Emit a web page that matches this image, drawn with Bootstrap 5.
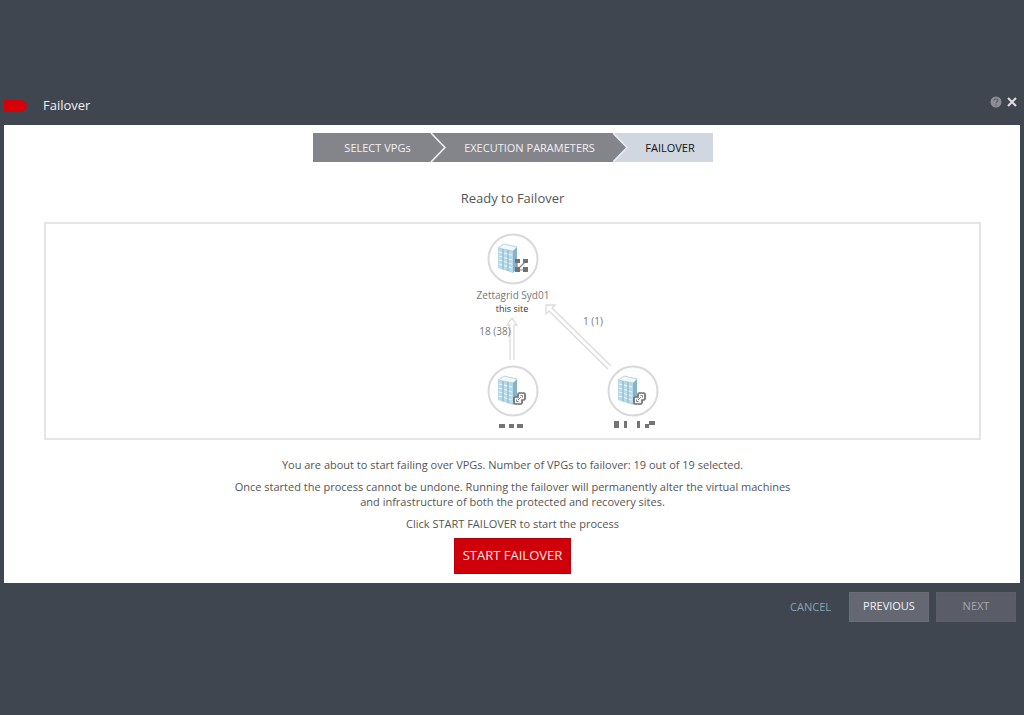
<!DOCTYPE html>
<html lang="en">
<head>
<meta charset="utf-8">
<meta name="viewport" content="width=device-width, initial-scale=1">
<title>Failover</title>
<link href="https://cdn.jsdelivr.net/npm/bootstrap@5.3.0/dist/css/bootstrap.min.css" rel="stylesheet">
<style>
body { background: #40464f; font-family: "Open Sans", sans-serif; font-size: 11px; line-height: 15px; color: #555; }
.wizard { border: 1px solid #4a434d; border-width: 1px 0; padding: 0 4px; }
.wizard-head { height: 35px; padding-bottom: 4px; color: #f0f1f3; }
.wizard-title { font-size: 13px; line-height: 18px; margin: 0 0 2px 15px; font-weight: 400; }
.head-icon { line-height: 0; color: inherit; border: 0; background: none; padding: 0; }
.wizard-panel { background: #fff; padding: 8px 39px 9px 40px; }
.wizard-panel p { margin-bottom: 7px; }
.steps { height: 29px; width: 400px; max-width: 100%; }
.step { background: #84848b; color: #f1f1f3; display: flex; align-items: center; justify-content: center; white-space: nowrap; }
.step-first { width: 118px; padding-left: 12px; }
.step-middle { flex: 1; padding-left: 15px; }
.step-last { background: #d0d7e1; color: #111; width: 99px; padding-left: 14px; }
.step-arrow { position: absolute; right: -15px; top: 0; z-index: 1; }
.ready { font-size: 13px; line-height: 18px; margin: 27px 0 15px; font-weight: 400; }
.topology { border: 2px solid #e5e5e5; margin-bottom: 17px; }
.topology svg { font-size: 10px; }
.btn-start { --bs-btn-color: #fbe9ea; --bs-btn-bg: #d0000b; --bs-btn-border-color: #b8000a; --bs-btn-hover-bg: #b8000a; --bs-btn-hover-color: #fff; --bs-btn-border-radius: 0; --bs-btn-font-size: 13px; --bs-btn-padding-x: 7px; --bs-btn-padding-y: 7px; height: 36px; min-width: 117px; white-space: nowrap; }
.wizard-foot { height: 42px; gap: 7px; padding: 5px 4px 0; }
.btn-foot { --bs-btn-color: #f2f2f4; --bs-btn-bg: #656872; --bs-btn-border-color: #6a6d77; --bs-btn-border-radius: 0; --bs-btn-font-size: 11px; --bs-btn-padding-y: 0; --bs-btn-padding-x: 0; --bs-btn-disabled-bg: #5a5d68; --bs-btn-disabled-color: #a4a7ae; --bs-btn-disabled-border-color: #5c5f6a; --bs-btn-disabled-opacity: 1; width: 80px; height: 30px; }
.cancel { color: #8ba3b3; margin-right: 11px; text-decoration: none; }
</style>
</head>
<body class="min-vh-100 d-flex flex-column justify-content-center">
<main class="wizard">
  <header class="wizard-head d-flex align-items-center">
    <svg width="24" height="14" viewBox="0 0 24 14" aria-hidden="true"><path d="M0 1H17Q20 1 24 7Q20 13 17 13H0Z" fill="#d5000a"/></svg>
    <h1 class="wizard-title">Failover</h1>
    <div class="ms-auto d-flex gap-1 pe-0 pb-2">
      <button type="button" class="head-icon" aria-label="Help"><svg width="12" height="12" viewBox="0 0 12 12"><circle cx="6" cy="6" r="5.5" fill="#8b8e95"/><path d="M4 4.7Q4.1 3 6 3Q8 3.1 7.8 4.6Q7.5 5.5 6.5 6Q6 6.3 6 7.2M6 8.3V9.5" fill="none" stroke="#5c626b" stroke-width="1.2"/></svg></button>
      <button type="button" class="head-icon" aria-label="Close"><svg width="14" height="12" viewBox="0 0 14 12"><path d="M2 2L10 10M10 2L2 10" stroke="#dfe1e4" stroke-width="2"/></svg></button>
    </div>
  </header>

  <section class="wizard-panel text-center">
    <div class="steps d-flex mx-auto">
      <div class="step step-first position-relative">SELECT VPGs
        <svg class="step-arrow" width="16" height="29" viewBox="0 0 16 29" aria-hidden="true"><path d="M0 0L14 14.5L0 29Z" fill="#84848b"/><path d="M1 0L15 14.5L1 29" fill="none" stroke="#f2f2f4" stroke-width="1.6"/></svg>
      </div>
      <div class="step step-middle position-relative">EXECUTION PARAMETERS
        <svg class="step-arrow" width="16" height="29" viewBox="0 0 16 29" aria-hidden="true"><path d="M0 0L14 14.5L0 29Z" fill="#84848b"/><path d="M0 0L14 14.5L0 29" fill="none" stroke="#e9edf2" stroke-width="1.6"/></svg>
      </div>
      <div class="step step-last">FAILOVER</div>
    </div>

    <h2 class="ready">Ready to Failover</h2>

    <div class="topology d-flex justify-content-center">
      <svg width="300" height="214" viewBox="0 0 300 214" role="img" aria-label="Sites taking part in the failover" text-anchor="middle">
        <defs>
          <g id="site">
            <circle r="24.5" fill="#fff" stroke="#d9d9db" stroke-width="2"/>
            <path d="M-15-11L0-8V14L-15 9Z" fill="#b8d9e8"/>
            <path d="M0-8L4-12V10L0 14Z" fill="#86b3cc"/>
            <path d="M-15-11L-9-15L4-12L0-8Z" fill="#f3f9fb" stroke="#a6c8d8" stroke-width=".8"/>
            <path d="M-10-10V10.500M-5-9V12" stroke="#83b2ca" stroke-width="1"/>
            <path d="M-14-7L-1-4M-14-3L-1 1M-14 1L-1 5M-14 5L-1 9" stroke="#e9f6fb" stroke-width="1.2" stroke-dasharray="3.400 1.700"/>
          </g>
          <g id="link" fill="none" stroke-linejoin="round">
            <path d="M7 2H12L13 3V8L12 9H10V12L9 13H3L2 12V7L3 6H6V3Z" fill="#f4f4f4" stroke="#707070" stroke-width="1.7"/>
            <path d="M8.500 4.500H10.500V6.500M4.500 8.500V10.500H6.500M6 9L9 6" stroke="#8a8a8a" stroke-width="1"/>
          </g>
        </defs>
        <g fill="#fff" stroke="#dcdcdc" stroke-width="1.3">
          <path d="M147 136V101H144L149 94L154 101H151V136"/>
          <path d="M245 145L186 87L183 90V81H192L189 84L248 142"/>
        </g>
        <use href="#site" x="150" y="35"/>
        <path d="M154 37V46H162M154 46L163 37" stroke="#8a8a8d" stroke-width="1.2" fill="none"/>
        <path d="M152 35h5v4h-5zM160 35h5v4h-5zM152 43h5v5h-5zM160 43h5v5h-5z" fill="#717174"/>
        <use href="#site" x="150" y="167"/><use href="#link" x="149" y="167"/>
        <use href="#site" x="270" y="167"/><use href="#link" x="269" y="167"/>
        <g fill="#777">
          <text x="150" y="75">Zettagrid Syd01</text>
          <text x="149" y="88" font-size="9" fill="#333">this site</text>
          <text x="132" y="111">18 (38)</text>
          <text x="230" y="101">1 (1)</text>
        </g>
        <path d="M136 200h6v4h-6zM146 200h5v4h-5zM154 200h6v4h-6zM251 197h5v7h-5zM261 197h3v7h-3zM274 197h3v7h-3zM282 200h4v4h-4zM286 197h6v4h-6z" fill="#747474"/>
      </svg>
    </div>

    <p>You are about to start failing over VPGs. Number of VPGs to failover: 19 out of 19 selected.</p>
    <p>Once started the process cannot be undone. Running the failover will permanently alter the virtual machines<br>and infrastructure of both the protected and recovery sites.</p>
    <p>Click START FAILOVER to start the process</p>
    <button type="button" class="btn btn-start">START FAILOVER</button>
  </section>

  <footer class="wizard-foot d-flex align-items-center justify-content-end">
    <a class="cancel" href="#">CANCEL</a>
    <button type="button" class="btn btn-foot">PREVIOUS</button>
    <button type="button" class="btn btn-foot" disabled>NEXT</button>
  </footer>
</main>
<script src="https://cdn.jsdelivr.net/npm/bootstrap@5.3.0/dist/js/bootstrap.bundle.min.js"></script>
</body>
</html>
